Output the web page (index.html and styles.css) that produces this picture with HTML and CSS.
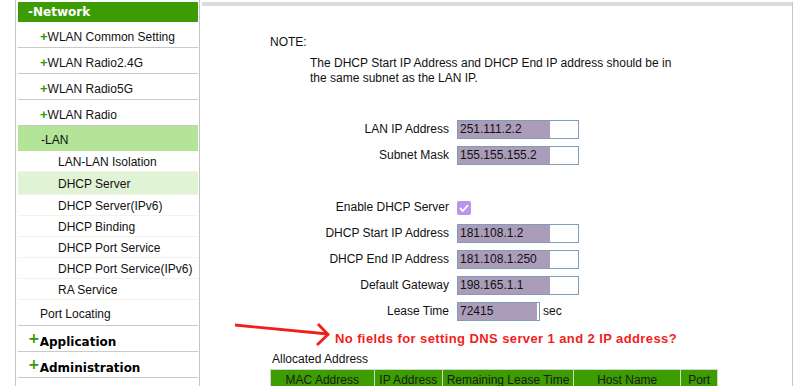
FILE: index.html
```html
<!DOCTYPE html>
<html lang="en">
<head>
  <meta charset="UTF-8" />
  <title>DHCP Server</title>
  <link rel="stylesheet" href="styles.css">
</head>
<body>
  <div class="page">
    <div class="menu">
      <div class="menu-head">-Network</div>
      <div class="item"><span class="plus">+</span>WLAN Common Setting</div>
      <div class="item"><span class="plus">+</span>WLAN Radio2.4G</div>
      <div class="item"><span class="plus">+</span>WLAN Radio5G</div>
      <div class="item"><span class="plus">+</span>WLAN Radio</div>
      <div class="item open">-LAN</div>
      <div class="sub">LAN-LAN Isolation</div>
      <div class="sub active">DHCP Server</div>
      <div class="sub">DHCP Server(IPv6)</div>
      <div class="sub">DHCP Binding</div>
      <div class="sub">DHCP Port Service</div>
      <div class="sub">DHCP Port Service(IPv6)</div>
      <div class="sub">RA Service</div>
      <div class="item">Port Locating</div>
      <div class="group"><span class="plus">+</span>Application</div>
      <div class="group"><span class="plus">+</span>Administration</div>
      <div class="group"></div>
    </div>

    <div class="content">
      <div class="topbar"></div>

      <div class="note-title">NOTE:</div>
      <div class="note-text">
        The DHCP Start IP Address and DHCP End IP address should be in<br>
        the same subnet as the LAN IP.
      </div>

      <div class="form">
        <label>LAN IP Address</label>
        <div><input class="ip" type="text" value="251.111.2.2"></div>
        <label>Subnet Mask</label>
        <div><input class="ip" type="text" value="155.155.155.2"></div>
        <div class="spacer"></div>
        <label>Enable DHCP Server</label>
        <div><span class="check"><svg width="14" height="14" viewBox="0 0 14 14"><path d="M3 7.2 L5.8 10 L11 4.2" fill="none" stroke="#fff" stroke-width="1.8"/></svg></span></div>
        <label>DHCP Start IP Address</label>
        <div><input class="ip" type="text" value="181.108.1.2"></div>
        <label>DHCP End IP Address</label>
        <div><input class="ip" type="text" value="181.108.1.250"></div>
        <label>Default Gateway</label>
        <div><input class="ip" type="text" value="198.165.1.1"></div>
        <label>Lease Time</label>
        <div class="lease-row"><input class="ip lease" type="text" value="72415"><span>sec</span></div>
      </div>

      <div class="remark">No fields for setting DNS server 1 and 2 IP address?</div>

      <div class="table-title">Allocated Address</div>
      <table class="alloc">
        <tr>
          <th class="c-mac">MAC Address</th>
          <th class="c-ip">IP Address</th>
          <th class="c-lease">Remaining Lease Time</th>
          <th class="c-host">Host Name</th>
          <th class="c-port">Port</th>
        </tr>
      </table>
    </div>

    <svg class="arrow" width="110" height="34" viewBox="0 0 110 34">
      <path d="M5 7 L98 16" stroke="#f21d1d" stroke-width="2.8" fill="none"/>
      <path d="M88 6 L98 16.5 L87 27" stroke="#f21d1d" stroke-width="2.8" fill="none"/>
    </svg>
  </div>
</body>
</html>
```

FILE: styles.css
```css
body {
  margin: 0;
  font-family: "Liberation Sans", Arial, sans-serif;
  font-size: 12px;
  color: #111;
  background: #fff;
}

.page {
  position: relative;
  display: flex;
  align-items: flex-start;
  padding-left: 15px;
  height: 386px;
  overflow: hidden;
}

/* left menu */
.menu {
  width: 180px;
  padding: 2px 1px 0 2px;
  border-left: 1px solid #c4c4c4;
  border-right: 1px solid #c4c4c4;
  height: 384px;
}

.menu-head {
  height: 20px;
  line-height: 21px;
  padding-left: 10px;
  background: #3d9c03;
  color: #fff;
  font-family: "DejaVu Sans", Verdana, sans-serif;
  font-weight: bold;
  font-size: 12px;
}

.item {
  height: 21px;
  padding-top: 4px;
  line-height: 21px;
  padding-left: 22px;
  border-bottom: 1px solid #cacaca;
}

.item.open {
  background: #b3e497;
  border-bottom: none;
  padding-left: 23px;
}

.plus {
  color: #2f9a00;
  font-weight: bold;
  font-size: 13px;
}

.sub {
  height: 20px;
  line-height: 22px;
  padding-left: 40px;
  border-bottom: 1px solid #f4f4e6;
}

.sub.active {
  background: #e0f3d4;
  height: 22px;
  line-height: 25px;
}

.group {
  height: 19px;
  padding-top: 6px;
  line-height: 21px;
  padding-left: 10px;
  border-bottom: 1px solid #cacaca;
  font-family: "DejaVu Sans", Verdana, sans-serif;
  font-weight: bold;
  font-size: 12px;
  color: #000;
}

.group .plus {
  font-size: 14px;
  line-height: 0;
  vertical-align: 3px;
}

/* content */
.content {
  margin-left: 2px;
  margin-top: 2px;
  width: 591px;
  height: 384px;
  border-right: 1px solid #c4c4c4;
  padding-left: 68px;
  box-sizing: border-box;
}

.topbar {
  height: 4px;
  background: #dcdcdc;
  margin-left: -68px;
}

.note-title {
  margin-top: 29px;
  line-height: 15px;
}

.note-text {
  margin-top: 6px;
  padding-left: 40px;
  line-height: 15px;
}

.form {
  margin-top: 30px;
  display: grid;
  grid-template-columns: 179px auto;
  grid-auto-rows: 26px;
  column-gap: 8px;
  align-items: center;
}

.form label {
  text-align: right;
}

.spacer {
  grid-column: 1 / 3;
}

.ip {
  box-sizing: border-box;
  width: 122px;
  height: 19px;
  padding: 0 2px;
  margin: 0;
  border: 1px solid #7f9db9;
  border-radius: 0;
  font-family: "Liberation Sans", Arial, sans-serif;
  font-size: 12px;
  color: #111;
  background: linear-gradient(to right, #ab9dba 92px, #fff 92px);
  vertical-align: middle;
}

.lease-row {
  display: flex;
  align-items: center;
  gap: 3px;
}

.ip.lease {
  width: 83px;
  background: linear-gradient(to right, #ab9dba 79px, #fff 79px);
}

.check {
  display: block;
  width: 14px;
  height: 14px;
  border-radius: 2px;
  background: #b797ec;
  margin-top: 1px;
}

.check svg {
  display: block;
}

.remark {
  margin-top: 7px;
  margin-left: 65px;
  line-height: 16px;
  color: #f21d1d;
  font-weight: bold;
  font-size: 13px;
  letter-spacing: 0.4px;
}

.table-title {
  margin-top: 5px;
  padding-left: 2px;
  line-height: 14px;
}

.alloc {
  margin-top: 3px;
  border-collapse: collapse;
  width: 448px;
}

.alloc th {
  background: #3c9c00;
  border: 1px solid #cfd8c8;
  height: 20px;
  padding: 0;
  font-weight: normal;
  font-size: 12px;
  color: #1a1a1a;
  text-align: center;
}

.c-mac { width: 104px; }
.c-ip { width: 68px; }
.c-lease { width: 132px; }
.c-host { width: 108px; }
.c-port { width: 36px; }

.arrow {
  position: absolute;
  left: 230px;
  top: 318px;
}
```
